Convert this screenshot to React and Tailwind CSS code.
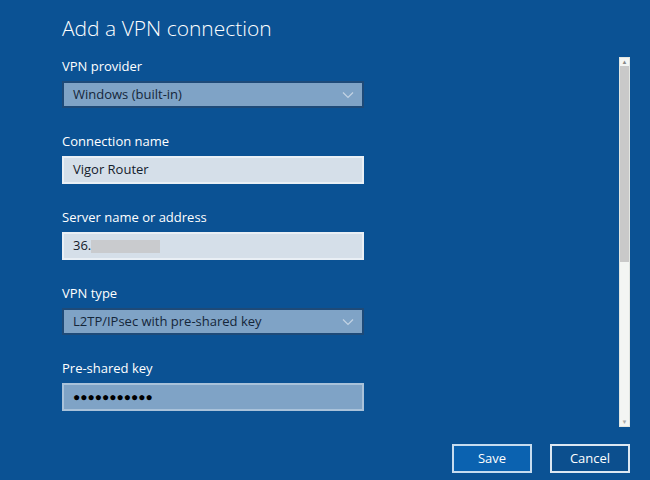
import React from 'react';

const font = { fontFamily: '"Open Sans", "Noto Sans", sans-serif' };

const Chevron = () => (
  <svg width="12" height="8" viewBox="0 0 12 8" className="text-[#c3d3e4]">
    <path d="M1 1.5 L6 6.5 L11 1.5" fill="none" stroke="currentColor" strokeWidth="1.2" />
  </svg>
);

const Field = ({ label, children }) => (
  <div className="flex flex-col">
    <div className="text-[13px] leading-[18px] text-white">{label}</div>
    <div className="mt-[6px]">{children}</div>
  </div>
);

const Dropdown = ({ value }) => (
  <div className="w-[302px] h-[27px] bg-[#7fa3c6] border-2 border-[#1e4a78] flex items-center justify-between pl-[9px] pr-[8px]">
    <span className="text-[13px] text-[#14263a]">{value}</span>
    <Chevron />
  </div>
);

const TextBox = ({ children, dark }) => (
  <div
    className={
      dark
        ? 'w-[302px] h-[28px] bg-[#7fa3c6] border-2 border-[#a9c2da] flex items-center pl-[9px]'
        : 'w-[302px] h-[28px] bg-[#d5dfe9] border-2 border-[#e9eff5] flex items-center pl-[9px]'
    }
  >
    {children}
  </div>
);

export default function App() {
  return (
    <div className="w-[650px] h-[480px] bg-[#0b5294] flex flex-col overflow-hidden" style={font}>
      <div className="flex h-[444px]">
        <div className="pl-[62px] pt-[14px] flex flex-col">
          <h1 className="text-[21px] leading-[28px] font-light text-white">Add a VPN connection</h1>
          <div className="mt-[15px] flex flex-col gap-[24px]">
            <Field label="VPN provider">
              <Dropdown value="Windows (built-in)" />
            </Field>
            <Field label="Connection name">
              <TextBox>
                <span className="text-[13px] text-[#14202c]">Vigor Router</span>
              </TextBox>
            </Field>
            <Field label="Server name or address">
              <TextBox>
                <span className="text-[13px] text-[#14202c]">36.</span>
                <span className="w-[69px] h-[13px] bg-[#c9cbce]" />
              </TextBox>
            </Field>
            <Field label="VPN type">
              <Dropdown value="L2TP/IPsec with pre-shared key" />
            </Field>
            <Field label="Pre-shared key">
              <TextBox dark>
                <span className="text-[12px] text-black">●●●●●●●●●●●</span>
              </TextBox>
            </Field>
          </div>
        </div>
        <div className="ml-auto mr-[20px] mt-[57px] w-[11px] h-[370px] bg-[#f3f5f3] border border-[#e2e6e2] flex flex-col items-center">
          <div className="text-[6px] leading-[6px] text-[#888] mt-[1px]">▲</div>
          <div className="w-[9px] h-[196px] bg-[#c9c9c9] mt-[1px]" />
          <div className="flex-1" />
          <div className="text-[6px] leading-[6px] text-[#aaa] mb-[1px]">▼</div>
        </div>
      </div>
      <div className="flex justify-end gap-[18px] pr-[20px]">
        <button className="w-[80px] h-[29px] bg-[#0b62b0] border-2 border-[#c7dcef] text-white text-[13px]">Save</button>
        <button className="w-[80px] h-[29px] bg-[#0c4f8e] border-2 border-[#dce7f2] text-white text-[13px]">Cancel</button>
      </div>
    </div>
  );
}
